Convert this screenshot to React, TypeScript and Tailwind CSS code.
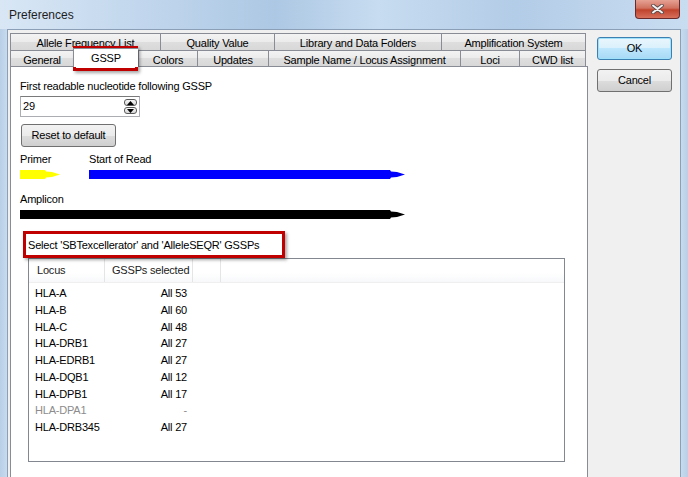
import React from "react";

const row1 = [
  { t: "Allele Frequency List", w: 150 },
  { t: "Quality Value", w: 114 },
  { t: "Library and Data Folders", w: 167 },
  { t: "Amplification System", w: 145 },
];
const row2 = [
  { t: "General", w: 63 },
  { t: "GSSP", w: 65, sel: true },
  { t: "Colors", w: 59 },
  { t: "Updates", w: 71 },
  { t: "Sample Name / Locus Assignment", w: 192 },
  { t: "Loci", w: 59 },
  { t: "CWD list", w: 67 },
];
const loci = [
  { l: "HLA-A", v: "All 53" },
  { l: "HLA-B", v: "All 60" },
  { l: "HLA-C", v: "All 48" },
  { l: "HLA-DRB1", v: "All 27" },
  { l: "HLA-EDRB1", v: "All 27" },
  { l: "HLA-DQB1", v: "All 12" },
  { l: "HLA-DPB1", v: "All 17" },
  { l: "HLA-DPA1", v: "-", dis: true },
  { l: "HLA-DRB345", v: "All 27" },
];

function Tab({ t, w, sel, last }: { t: string; w: number; sel?: boolean; last?: boolean }) {
  if (sel) {
    return (
      <div
        style={{ width: w }}
        className="relative z-10 -mt-[2px] h-[19px] shrink-0 border-l border-t border-[#898c95] bg-white pt-[3px] text-center leading-[13px] whitespace-nowrap"
      >
        {t}
      </div>
    );
  }
  return (
    <div
      style={{ width: w }}
      className={`h-full shrink-0 border-l border-t border-[#898c95] bg-[linear-gradient(to_bottom,#f3f3f3_0%,#ebebeb_50%,#dedede_50%,#d8d8d8_100%)] pt-[3px] text-center leading-[13px] whitespace-nowrap ${last ? "border-r" : ""}`}
    >
      {t}
    </div>
  );
}

function Arrow({ w, color }: { w: number; color: string }) {
  const b = w - 15;
  return (
    <svg width={w} height={9} viewBox={`0 0 ${w} 9`} className="block">
      <polygon
        fill={color}
        points={`0,0 ${b},0 ${b + 1},1.5 ${b + 7},2 ${w},4.5 ${b + 7},7 ${b + 1},7.5 ${b},9 0,9`}
      />
    </svg>
  );
}

function SpinBtn({ up }: { up?: boolean }) {
  return (
    <div className="flex h-[7px] w-[13px] items-center justify-center rounded-[3px] border border-[#5a5a5a] bg-[linear-gradient(to_bottom,#f8f8f8,#d6d6d6)]">
      <svg width="7" height="4" viewBox="0 0 7 4">
        <polygon fill="#000" points={up ? "0,4 7,4 3.5,0" : "0,0 7,0 3.5,4"} />
      </svg>
    </div>
  );
}

export default function App() {
  return (
    <div className="relative h-[477px] w-[688px] overflow-hidden bg-[#c3d7ec] font-['Liberation_Sans',Arial,sans-serif] text-[11px] tracking-[-0.2px] text-black">
      {/* title bar */}
      <div className="flex h-[29px] items-start justify-between bg-[linear-gradient(to_right,#d9e7f5_0%,#c2d7ed_20%,#adc8e4_40%,#c7dcf0_55%,#b3cce7_75%,#c9ddf1_100%)]">
        <div className="pl-[9px] pt-[8px] text-[12px] leading-[15px] tracking-normal text-[#1e1e1e]">Preferences</div>
        <div className="mr-[8px] flex h-[19px] w-[45px] items-center justify-center rounded-b-[4px] border border-t-0 border-[#6b2a2a] bg-[linear-gradient(to_bottom,#e6a294_0%,#d0715f_45%,#c0432c_55%,#d7705c_100%)]">
          <svg width="13" height="10" viewBox="0 0 13 10">
            <path d="M2 1.5 L11 8.5 M11 1.5 L2 8.5" stroke="#5a4a4a" strokeWidth="3.6" strokeLinecap="round" />
            <path d="M2 1.5 L11 8.5 M11 1.5 L2 8.5" stroke="#f4f4f4" strokeWidth="2" strokeLinecap="round" />
          </svg>
        </div>
      </div>

      {/* body */}
      <div className="flex h-[448px]">
        <div className="w-[7px] bg-[linear-gradient(to_right,#b9cfe6,#c8dbee)]" />
        <div className="flex w-[674px] border-l border-r border-t border-[#8b9fb6] bg-[#f0f0f0] pl-[2px] pt-[3px]">
          {/* tab control */}
          <div className="flex w-[578px] flex-col">
            <div className="flex h-[17px] w-[576px]">
              {row1.map((t, i) => (
                <Tab key={t.t} t={t.t} w={t.w} last={i === row1.length - 1} />
              ))}
            </div>
            <div className="flex h-[16px] w-[576px] items-start">
              {row2.map((t, i) => (
                <Tab key={t.t} t={t.t} w={t.w} sel={t.sel} last={i === row2.length - 1} />
              ))}
            </div>
            <div className="h-[430px] w-[578px] shrink-0 border border-[#898c95] bg-white pl-[9px] pt-[13px]">
              <div className="leading-[13px] whitespace-nowrap">First readable nucleotide following GSSP</div>
              <div className="mt-[3px] flex h-[21px] w-[120px] items-center justify-between border border-[#abadb3] border-t-[#7a7a7a] pl-[2px] pr-[2px]">
                <span className="leading-[13px]">29</span>
                <div className="flex flex-col gap-[1px]">
                  <SpinBtn up />
                  <SpinBtn />
                </div>
              </div>
              <div className="ml-[1px] mt-[7px] flex h-[23px] w-[95px] items-center justify-center rounded-[3px] border border-[#707070] bg-[linear-gradient(to_bottom,#f2f2f2_0%,#ebebeb_50%,#dddddd_50%,#cfcfcf_100%)] leading-[13px] whitespace-nowrap">
                Reset to default
              </div>
              <div className="mt-[6px] flex leading-[13px]">
                <span className="w-[69px]">Primer</span>
                <span>Start of Read</span>
              </div>
              <div className="mt-[4px] flex">
                <div className="w-[69px]">
                  <Arrow w={40} color="#ffff00" />
                </div>
                <Arrow w={316} color="#0000ff" />
              </div>
              <div className="mt-[14px] leading-[13px]">Amplicon</div>
              <div className="mt-[4px]">
                <Arrow w={385} color="#000000" />
              </div>
              <div className="mt-[20px] pl-[8px] leading-[13px] whitespace-nowrap">Select 'SBTexcellerator' and 'AlleleSEQR' GSSPs</div>
              <div className="ml-[8px] mt-[6px] h-[204px] w-[537px] border border-[#828790] bg-white">
                <div className="flex h-[24px] border-b border-[#efefef] bg-[linear-gradient(to_bottom,#ffffff_0%,#ffffff_60%,#f7f8fa_100%)] text-[#222]">
                  <div className="flex w-[76px] items-center border-r border-[#e5e5e5] pl-[8px] whitespace-nowrap">Locus</div>
                  <div className="flex w-[88px] items-center border-r border-[#e5e5e5] pl-[7px] whitespace-nowrap">GSSPs selected</div>
                  <div className="w-[28px] border-r border-[#e5e5e5]" />
                </div>
                <div className="pt-[2px]">
                  {loci.map((r) => (
                    <div key={r.l} className={`flex h-[16.75px] items-center whitespace-nowrap ${r.dis ? "text-[#8c8c8c]" : "text-black"}`}>
                      <div className="w-[76px] pl-[6px]">{r.l}</div>
                      <div className="w-[82px] text-right">{r.v}</div>
                    </div>
                  ))}
                </div>
              </div>
            </div>
          </div>

          {/* buttons */}
          <div className="ml-[9px] flex flex-col gap-[9px] pt-[4px]">
            <div className="flex h-[23px] w-[75px] items-center justify-center rounded-[3px] border border-[#3c7fb1] bg-[linear-gradient(to_bottom,#eaf6fd_0%,#d9f0fc_50%,#bee6fd_50%,#a7d9f5_100%)] leading-[13px] shadow-[inset_0_0_0_1px_#9fe0fb]">
              OK
            </div>
            <div className="flex h-[23px] w-[75px] items-center justify-center rounded-[3px] border border-[#707070] bg-[linear-gradient(to_bottom,#f2f2f2_0%,#ebebeb_50%,#dddddd_50%,#cfcfcf_100%)] leading-[13px]">
              Cancel
            </div>
          </div>
        </div>
        <div className="w-[7px] bg-[linear-gradient(to_right,#c8dbee,#b9cfe6)]" />
      </div>

      {/* red annotation boxes */}
      <div className="pointer-events-none absolute left-[73px] top-[46px] h-[25px] w-[65px] border-[3px] border-[#c00000] shadow-[2px_2px_3px_rgba(0,0,0,0.35)]" />
      <div className="pointer-events-none absolute left-[23px] top-[231px] h-[27px] w-[262px] border-[3px] border-[#c00000] shadow-[2px_2px_3px_rgba(0,0,0,0.35)]" />
    </div>
  );
}
